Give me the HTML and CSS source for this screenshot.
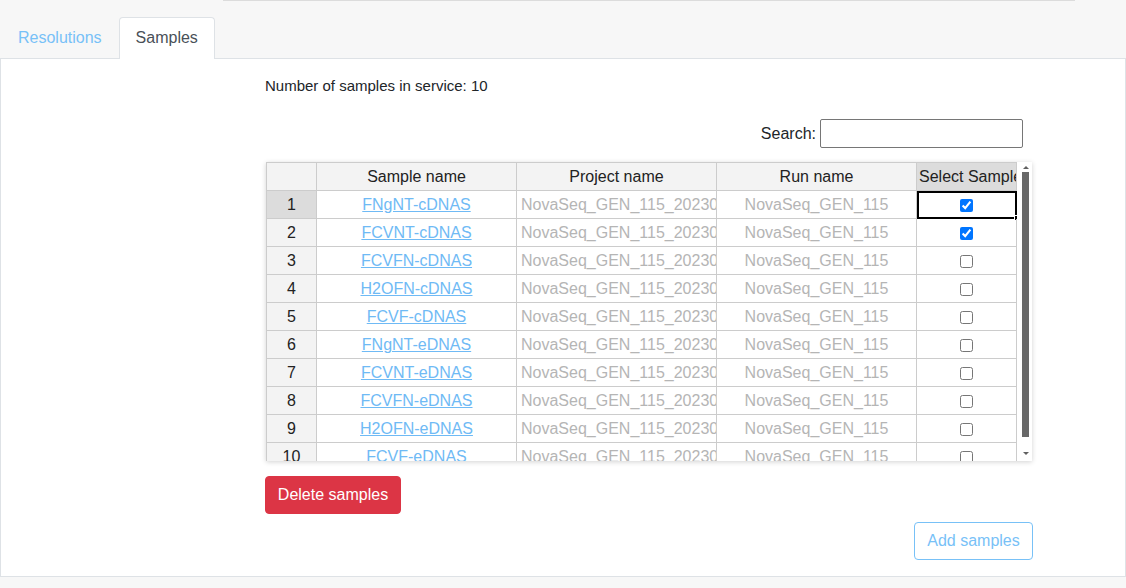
FILE: index.html
```html
<!DOCTYPE html>
<html>
<head>
<meta charset="utf-8">
<link rel="stylesheet" href="styles.css">
</head>
<body>
<div class="topline"></div>
<ul class="tabs">
  <li class="tab">Resolutions</li>
  <li class="tab active">Samples</li>
</ul>
<div class="panel">
  <div class="content">
    <p class="count">Number of samples in service: 10</p>
    <div class="search">
      <label>Search:</label>
      <input type="text">
    </div>
    <div class="grid">
      <div class="viewport">
        <table>
          <thead>
            <tr>
              <th class="rh"></th>
              <th>Sample name</th>
              <th>Project name</th>
              <th>Run name</th>
              <th class="hl">Select Samples</th>
            </tr>
          </thead>
          <tbody>
            <tr><td class="rh sel">1</td><td class="link"><a>FNgNT-cDNAS</a></td><td class="proj">NovaSeq_GEN_115_20230510</td><td class="run">NovaSeq_GEN_115</td><td class="chk current"><input type="checkbox" checked><span class="handle"></span></td></tr>
            <tr><td class="rh">2</td><td class="link"><a>FCVNT-cDNAS</a></td><td class="proj">NovaSeq_GEN_115_20230510</td><td class="run">NovaSeq_GEN_115</td><td class="chk"><input type="checkbox" checked></td></tr>
            <tr><td class="rh">3</td><td class="link"><a>FCVFN-cDNAS</a></td><td class="proj">NovaSeq_GEN_115_20230510</td><td class="run">NovaSeq_GEN_115</td><td class="chk"><input type="checkbox"></td></tr>
            <tr><td class="rh">4</td><td class="link"><a>H2OFN-cDNAS</a></td><td class="proj">NovaSeq_GEN_115_20230510</td><td class="run">NovaSeq_GEN_115</td><td class="chk"><input type="checkbox"></td></tr>
            <tr><td class="rh">5</td><td class="link"><a>FCVF-cDNAS</a></td><td class="proj">NovaSeq_GEN_115_20230510</td><td class="run">NovaSeq_GEN_115</td><td class="chk"><input type="checkbox"></td></tr>
            <tr><td class="rh">6</td><td class="link"><a>FNgNT-eDNAS</a></td><td class="proj">NovaSeq_GEN_115_20230510</td><td class="run">NovaSeq_GEN_115</td><td class="chk"><input type="checkbox"></td></tr>
            <tr><td class="rh">7</td><td class="link"><a>FCVNT-eDNAS</a></td><td class="proj">NovaSeq_GEN_115_20230510</td><td class="run">NovaSeq_GEN_115</td><td class="chk"><input type="checkbox"></td></tr>
            <tr><td class="rh">8</td><td class="link"><a>FCVFN-eDNAS</a></td><td class="proj">NovaSeq_GEN_115_20230510</td><td class="run">NovaSeq_GEN_115</td><td class="chk"><input type="checkbox"></td></tr>
            <tr><td class="rh">9</td><td class="link"><a>H2OFN-eDNAS</a></td><td class="proj">NovaSeq_GEN_115_20230510</td><td class="run">NovaSeq_GEN_115</td><td class="chk"><input type="checkbox"></td></tr>
            <tr><td class="rh">10</td><td class="link"><a>FCVF-eDNAS</a></td><td class="proj">NovaSeq_GEN_115_20230510</td><td class="run">NovaSeq_GEN_115</td><td class="chk"><input type="checkbox"></td></tr>
          </tbody>
        </table>
      </div>
      <div class="scrollbar">
        <span class="arrow up"></span>
        <span class="thumb"></span>
        <span class="arrow down"></span>
      </div>
    </div>
    <button class="btn danger">Delete samples</button>
    <div class="actions">
      <button class="btn outline">Add samples</button>
    </div>
  </div>
</div>
</body>
</html>
```
FILE: styles.css
```css
* { box-sizing: border-box; }
body {
  margin: 0;
  background: #f7f7f7;
  font-family: "Liberation Sans", Arial, sans-serif;
  color: #212529;
  height: 588px;
  overflow: hidden;
}
.topline {
  margin-left: 223px;
  width: 852px;
  height: 1px;
  background: #dcdcdc;
}
.tabs {
  list-style: none;
  margin: 16px 0 0 0;
  padding: 0 0 0 1px;
  display: flex;
  position: relative;
  z-index: 1;
}
.tab {
  font-size: 16px;
  line-height: 24px;
  padding: 8px 16px;
  border: 1px solid transparent;
  border-bottom: none;
  border-radius: 4px 4px 0 0;
  color: #78c1f7;
  height: 42px;
}
.tab.active {
  background: #fff;
  border-color: #dee2e6;
  color: #495057;
}
.panel {
  background: #fff;
  border: 1px solid #dee2e6;
  margin-top: -1px;
  height: 519px;
}
.content {
  padding: 18px 0 0 264px;
  width: 1032px;
  display: flex;
  flex-direction: column;
}
.count {
  margin: 0;
  font-size: 15px;
  line-height: 18px;
}
.search {
  display: flex;
  align-items: center;
  justify-content: flex-end;
  gap: 4px;
  margin: 24px 10px 0 0;
  font-size: 16px;
}
.search input {
  width: 203px;
  height: 29px;
  border: 1px solid #767676;
  border-radius: 2px;
  margin: 0;
}
.grid {
  margin: 14px 0 0 1px;
  width: 766px;
  height: 299px;
  display: flex;
  box-shadow: 0 1px 5px rgba(0,0,0,0.18);
  background: #fff;
}
.viewport {
  width: 751px;
  height: 299px;
  overflow: hidden;
}
table {
  border-collapse: separate;
  border-spacing: 0;
  table-layout: fixed;
  width: 751px;
  font-size: 16px;
}
th, td {
  padding: 0 4px;
  line-height: 27px;
  border-right: 1px solid #ccc;
  border-bottom: 1px solid #ccc;
  white-space: nowrap;
  overflow: hidden;
  text-align: center;
  font-weight: normal;
  color: #222;
}
th {
  background: #f3f3f3;
  border-top: 1px solid #ccc;
  line-height: 27px;
}
th:nth-child(1) { width: 51px; }
th:nth-child(2), th:nth-child(3), th:nth-child(4) { width: 200px; }
th:nth-child(5) { width: 100px; }
.rh {
  border-left: 1px solid #ccc;
  background: #f3f3f3;
}
.rh.sel, th.hl { background: #dcdcdc; }
th.hl { text-align: left; padding-left: 2px; }
.link a {
  color: #6fbaf5;
  text-decoration: underline;
}
.proj {
  text-align: left;
  text-overflow: clip;
  color: #b5b5b5;
}
.run { color: #b5b5b5; }
.chk input {
  width: 13px;
  height: 13px;
  margin: 0;
  vertical-align: middle;
}
.chk { position: relative; }
.chk.current {
  outline: 2px solid #000;
  outline-offset: -2px;
  overflow: visible;
}
.handle {
  position: absolute;
  right: -4px;
  bottom: -3px;
  width: 6px;
  height: 6px;
  background: #000;
  border: 1px solid #fff;
}
.scrollbar {
  width: 15px;
  height: 299px;
  background: #fff;
  display: flex;
  flex-direction: column;
  align-items: flex-start;
  padding-left: 5px;
}
.arrow {
  width: 0;
  height: 0;
  border-left: 3px solid transparent;
  border-right: 3px solid transparent;
  margin-left: 1px;
}
.arrow.up { border-bottom: 3px solid #606060; margin-top: 4px; }
.arrow.down { border-top: 3px solid #606060; margin-top: 15px; }
.thumb {
  width: 7px;
  height: 265px;
  margin-top: 3px;
  background: #686868;
}
.btn {
  font-family: "Liberation Sans", Arial, sans-serif;
  font-size: 16px;
  line-height: 24px;
  padding: 6px 0;
  border-radius: 4px;
  white-space: nowrap;
  text-align: center;
  cursor: pointer;
}
.danger {
  margin-top: 15px;
  align-self: flex-start;
  width: 136px;
  height: 38px;
  background: #dc3545;
  border: 1px solid #dc3545;
  color: #fff;
}
.actions {
  display: flex;
  justify-content: flex-end;
  margin-top: 8px;
}
.outline {
  width: 119px;
  height: 38px;
  background: #fff;
  border: 1px solid #78c1f7;
  color: #78c1f7;
}
```
